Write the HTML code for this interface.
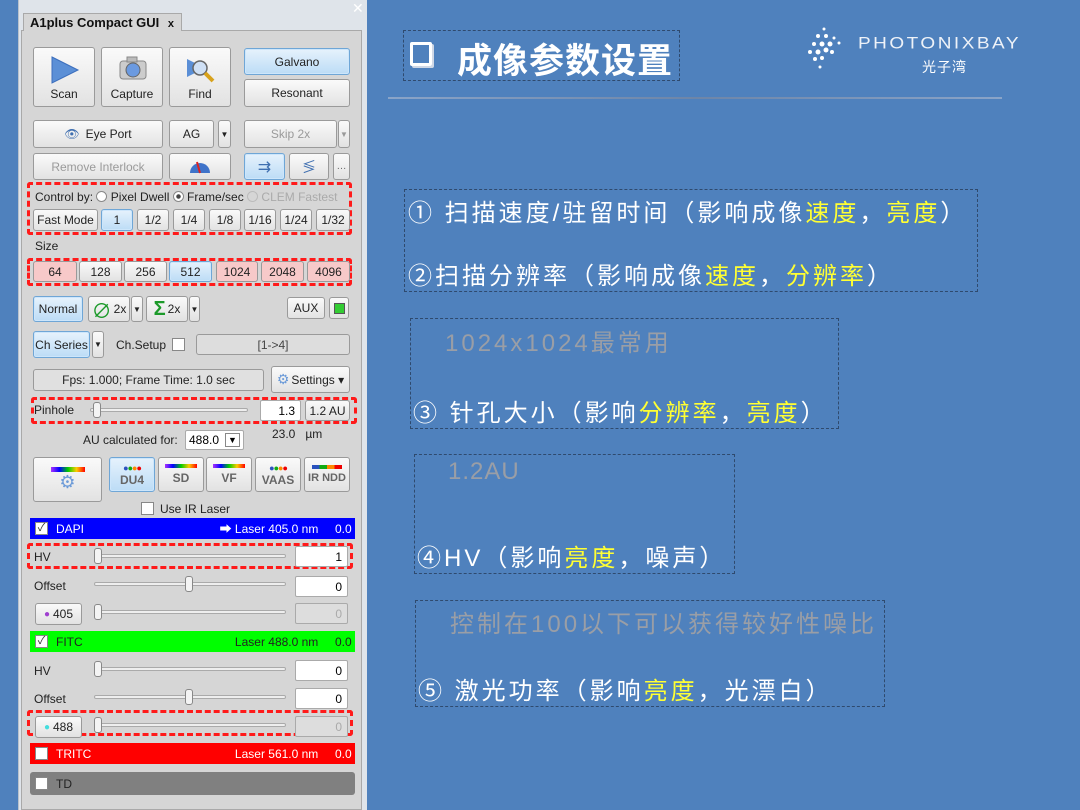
<!DOCTYPE html>
<html><head><meta charset="utf-8"><style>
*{margin:0;padding:0;box-sizing:border-box}
body{width:1080px;height:810px;overflow:hidden;background:#4f81bd;font-family:"Liberation Sans","Noto Sans CJK SC",sans-serif;position:relative}
.a{position:absolute}
.b{position:absolute;border:1px solid #9a9a9a;border-radius:3px;background:linear-gradient(#fafafa,#e2e2e2);font-size:12px;color:#222;display:flex;align-items:center;justify-content:center;white-space:nowrap}
.sel{background:linear-gradient(#e6f2fc,#bcdcf6);border-color:#6fa6d6;box-shadow:inset 0 0 0 1px #cde6fb}
.pk{background:#f7c9c9}
.dis{color:#9a9a9a}
.dash{position:absolute;border:3px dashed #ff1a1a;border-radius:3px}
.t{position:absolute;font-size:12px;color:#222;white-space:nowrap}
.sl{position:absolute;height:4px;border:1px solid #aaa;border-radius:2px;background:#eee}
.th{position:absolute;width:8px;height:16px;border:1px solid #888;border-radius:3px;background:#f4f4f4}
.in{position:absolute;background:#fff;border:1px solid #aaa;border-radius:2px;font-size:12px;text-align:right;padding-right:5px;display:flex;align-items:center;justify-content:flex-end}
.bar{position:absolute;left:30px;width:325px;height:21px;font-size:12px;display:flex;align-items:center}
.cb{width:13px;height:13px;background:#fff;border:1px solid #888;margin:0 8px 0 5px;font-size:11px;line-height:11px;text-align:center;color:#333}
.rbox{position:absolute;border:1px dashed #2f4a6e}
.r{position:absolute;white-space:nowrap;color:#fff;font-size:24px;letter-spacing:3px}
.y{color:#ffff33}
.g{color:#9a9ea6}
</style></head><body>
<div class="a" style="left:18px;top:0;width:349px;height:810px;background:#dfe4ea;border-left:1px solid #b9c2cc"></div>
<div class="a" style="left:352px;top:0;font-size:14px;color:#fff">✕</div>
<div class="a" style="left:21px;top:30px;width:341px;height:780px;background:#d6d6d6;border:1px solid #a9a9a9"></div>
<div class="a" style="left:23px;top:13px;width:159px;height:18px;background:#d6d6d6;border:1px solid #a9a9a9;border-bottom:none;font-size:13px;font-weight:bold;padding:1px 0 0 6px;color:#111">A1plus Compact GUI <span style="font-size:11px;margin-left:5px">x</span></div>

<div class="b" style="left:33px;top:47px;width:62px;height:60px;flex-direction:column;justify-content:flex-end;padding-bottom:5px"><svg class="a" style="left:16px;top:8px" width="30" height="28"><polygon points="2,1 28,14 2,27" fill="#5b8fd6" stroke="#3c6ebd"/></svg>Scan</div>
<div class="b" style="left:101px;top:47px;width:62px;height:60px;flex-direction:column;justify-content:flex-end;padding-bottom:5px"><svg class="a" style="left:17px;top:8px" width="28" height="24"><rect x="1" y="5" width="26" height="18" rx="3" fill="#ccc" stroke="#888"/><rect x="8" y="1" width="10" height="5" fill="#bbb" stroke="#888"/><circle cx="14" cy="14" r="7" fill="#6b9ae0" stroke="#666"/></svg>Capture</div>
<div class="b" style="left:169px;top:47px;width:62px;height:60px;flex-direction:column;justify-content:flex-end;padding-bottom:5px"><svg class="a" style="left:15px;top:8px" width="32" height="28"><polygon points="2,3 20,12 2,21" fill="#5b8fd6"/><circle cx="15" cy="12" r="7" fill="#cfe0f5" stroke="#666" stroke-width="1.5"/><line x1="20" y1="17" x2="28" y2="25" stroke="#d8a21c" stroke-width="4"/></svg>Find</div>
<div class="b sel" style="left:244px;top:48px;width:106px;height:27px">Galvano</div>
<div class="b" style="left:244px;top:79px;width:106px;height:28px">Resonant</div>

<div class="b" style="left:33px;top:120px;width:130px;height:28px"><span style="color:#3f6fb0;margin-right:6px">👁</span>Eye Port</div>
<div class="b" style="left:169px;top:120px;width:45px;height:28px">AG</div>
<div class="b" style="left:218px;top:120px;width:13px;height:28px;font-size:8px">▼</div>
<div class="b dis" style="left:244px;top:120px;width:93px;height:28px">Skip 2x</div>
<div class="b dis" style="left:338px;top:120px;width:12px;height:28px;font-size:8px">▼</div>
<div class="b dis" style="left:33px;top:153px;width:130px;height:27px">Remove Interlock</div>
<div class="b" style="left:169px;top:153px;width:62px;height:27px"><svg width="24" height="14"><path d="M2,13 A10,10 0 0 1 22,13Z" fill="#3f73c9"/><line x1="12" y1="13" x2="9" y2="2" stroke="#d22" stroke-width="2"/></svg></div>
<div class="b sel" style="left:244px;top:153px;width:41px;height:27px;color:#3f6fb0;font-size:16px">⇉</div>
<div class="b" style="left:289px;top:153px;width:40px;height:27px;color:#3f6fb0;font-size:14px">≶</div>
<div class="b" style="left:333px;top:153px;width:17px;height:27px;font-size:10px;color:#666">…</div>

<div class="dash" style="left:27px;top:182px;width:325px;height:53px"></div>
<div class="t" style="left:35px;top:190px">Control by: <span style="display:inline-block;width:11px;height:11px;border:1px solid #888;border-radius:50%;background:#fff;vertical-align:-1px"></span> Pixel Dwell <span style="display:inline-block;width:11px;height:11px;border:1px solid #888;border-radius:50%;background:radial-gradient(#444 30%,#fff 40%);vertical-align:-1px"></span> Frame/sec <span style="color:#aaa"><span style="display:inline-block;width:11px;height:11px;border:1px solid #bbb;border-radius:50%;vertical-align:-1px"></span> CLEM Fastest</span></div>
<div class="b" style="left:33px;top:209px;width:65px;height:22px">Fast Mode</div>
<div class="b sel" style="left:101px;top:209px;width:32px;height:22px">1</div>
<div class="b" style="left:137px;top:209px;width:32px;height:22px">1/2</div>
<div class="b" style="left:173px;top:209px;width:32px;height:22px">1/4</div>
<div class="b" style="left:209px;top:209px;width:32px;height:22px">1/8</div>
<div class="b" style="left:244px;top:209px;width:32px;height:22px">1/16</div>
<div class="b" style="left:280px;top:209px;width:32px;height:22px">1/24</div>
<div class="b" style="left:316px;top:209px;width:34px;height:22px">1/32</div>
<div class="t" style="left:35px;top:239px">Size</div>
<div class="dash" style="left:27px;top:258px;width:325px;height:28px"></div>
<div class="b pk" style="left:33px;top:261px;width:44px;height:21px">64</div>
<div class="b" style="left:79px;top:261px;width:43px;height:21px">128</div>
<div class="b" style="left:124px;top:261px;width:43px;height:21px">256</div>
<div class="b sel" style="left:169px;top:261px;width:43px;height:21px">512</div>
<div class="b pk" style="left:216px;top:261px;width:42px;height:21px">1024</div>
<div class="b pk" style="left:261px;top:261px;width:43px;height:21px">2048</div>
<div class="b pk" style="left:307px;top:261px;width:43px;height:21px">4096</div>

<div class="b sel" style="left:33px;top:296px;width:50px;height:26px">Normal</div>
<div class="b" style="left:88px;top:296px;width:42px;height:26px"><span style="color:#1c9a2a;font-size:20px;margin-right:2px">∅</span>2x</div>
<div class="b" style="left:131px;top:296px;width:12px;height:26px;font-size:8px">▼</div>
<div class="b" style="left:146px;top:296px;width:42px;height:26px"><span style="color:#1c9a2a;font-size:20px;font-weight:bold;margin-right:2px">Σ</span>2x</div>
<div class="b" style="left:189px;top:296px;width:11px;height:26px;font-size:8px">▼</div>
<div class="b" style="left:287px;top:297px;width:38px;height:22px">AUX</div>
<div class="b" style="left:329px;top:297px;width:20px;height:22px"><div style="width:11px;height:11px;background:#3c3;border:1px solid #555"></div></div>

<div class="b sel" style="left:33px;top:331px;width:57px;height:27px">Ch Series</div>
<div class="b" style="left:92px;top:331px;width:12px;height:27px;font-size:8px">▼</div>
<div class="t" style="left:116px;top:338px">Ch.Setup</div>
<div class="a" style="left:172px;top:338px;width:13px;height:13px;background:#fff;border:1px solid #888"></div>
<div class="b" style="left:196px;top:334px;width:154px;height:21px;background:#ddd;color:#444">[1-&gt;4]</div>
<div class="b" style="left:33px;top:369px;width:231px;height:22px;background:#e0e0e0">Fps: 1.000; Frame Time: 1.0 sec</div>
<div class="b" style="left:271px;top:366px;width:79px;height:27px"><span style="color:#6b9ad8;font-size:14px;margin-right:2px">⚙</span>Settings ▾</div>

<div class="dash" style="left:31px;top:397px;width:326px;height:27px"></div>
<div class="t" style="left:34px;top:403px">Pinhole</div>
<div class="sl" style="left:90px;top:408px;width:158px"></div>
<div class="th" style="left:93px;top:402px"></div>
<div class="in" style="left:260px;top:400px;width:41px;height:21px">1.3</div>
<div class="b" style="left:305px;top:400px;width:45px;height:21px">1.2 AU</div>
<div class="t" style="left:272px;top:427px">23.0 &nbsp; µm</div>
<div class="t" style="left:83px;top:433px">AU calculated for:</div>
<div class="in" style="left:185px;top:430px;width:59px;height:20px;justify-content:flex-start;padding-left:3px">488.0<span style="margin-left:6px;font-size:9px;border:1px solid #888;padding:1px 2px">▼</span></div>

<div class="b" style="left:33px;top:457px;width:69px;height:45px;flex-direction:column"><div style="width:34px;height:5px;background:linear-gradient(90deg,#a3f,#00f,#0c0,#fc0,#f00)"></div><span style="color:#6b9ad8;font-size:18px">⚙</span></div>
<div class="b sel" style="left:109px;top:457px;width:46px;height:35px;flex-direction:column;font-weight:bold;color:#666"><span style="font-size:9px;letter-spacing:-1px"><span style="color:#2a52be">●</span><span style="color:#1a1">●</span><span style="color:#f80">●</span><span style="color:#e00">●</span></span>DU4</div>
<div class="b" style="left:158px;top:457px;width:46px;height:35px;flex-direction:column;font-weight:bold;color:#666"><div style="width:32px;height:4px;background:linear-gradient(90deg,#a3f,#00f,#0c0,#fc0,#f00);margin-bottom:3px"></div>SD</div>
<div class="b" style="left:206px;top:457px;width:46px;height:35px;flex-direction:column;font-weight:bold;color:#666"><div style="width:32px;height:4px;background:linear-gradient(90deg,#a3f,#00f,#0c0,#fc0,#f00);margin-bottom:3px"></div>VF</div>
<div class="b" style="left:255px;top:457px;width:46px;height:35px;flex-direction:column;font-weight:bold;color:#666"><span style="font-size:9px;letter-spacing:-1px"><span style="color:#2a52be">●</span><span style="color:#1a1">●</span><span style="color:#f80">●</span><span style="color:#e00">●</span></span>VAAS</div>
<div class="b" style="left:304px;top:457px;width:46px;height:35px;flex-direction:column;font-weight:bold;color:#666;font-size:11px"><div style="width:30px;height:4px;background:linear-gradient(90deg,#2a52be 25%,#1a1 25% 50%,#f80 50% 75%,#e00 75%);margin-bottom:3px"></div>IR NDD</div>
<div class="a" style="left:141px;top:502px;width:13px;height:13px;background:#fff;border:1px solid #888"></div>
<div class="t" style="left:160px;top:502px">Use IR Laser</div>

<div class="bar" style="top:518px;background:#0000ff;color:#fff"><div class="cb">✓</div>DAPI<span style="margin-left:auto">➡ Laser 405.0 nm&nbsp;&nbsp;&nbsp;&nbsp;&nbsp;0.0&nbsp;</span></div>
<div class="dash" style="left:27px;top:543px;width:326px;height:26px"></div>
<div class="t" style="left:34px;top:550px">HV</div>
<div class="sl" style="left:94px;top:554px;width:192px"></div><div class="th" style="left:94px;top:548px"></div>
<div class="in" style="left:295px;top:546px;width:53px;height:21px">1</div>
<div class="t" style="left:34px;top:579px">Offset</div>
<div class="sl" style="left:94px;top:582px;width:192px"></div><div class="th" style="left:185px;top:576px"></div>
<div class="in" style="left:295px;top:576px;width:53px;height:21px">0</div>
<div class="b" style="left:35px;top:603px;width:47px;height:22px"><span style="color:#a040d0;font-size:10px;margin-right:3px">●</span>405</div>
<div class="sl" style="left:94px;top:610px;width:192px"></div><div class="th" style="left:94px;top:604px"></div>
<div class="in" style="left:295px;top:603px;width:53px;height:21px;background:#ddd;color:#aaa">0</div>

<div class="bar" style="top:631px;background:#00ff00;color:#222"><div class="cb">✓</div>FITC<span style="margin-left:auto">Laser 488.0 nm&nbsp;&nbsp;&nbsp;&nbsp;&nbsp;0.0&nbsp;</span></div>
<div class="t" style="left:34px;top:664px">HV</div>
<div class="sl" style="left:94px;top:667px;width:192px"></div><div class="th" style="left:94px;top:661px"></div>
<div class="in" style="left:295px;top:660px;width:53px;height:21px">0</div>
<div class="t" style="left:34px;top:692px">Offset</div>
<div class="sl" style="left:94px;top:695px;width:192px"></div><div class="th" style="left:185px;top:689px"></div>
<div class="in" style="left:295px;top:688px;width:53px;height:21px">0</div>
<div class="dash" style="left:27px;top:710px;width:326px;height:26px"></div>
<div class="b" style="left:35px;top:716px;width:47px;height:22px"><span style="color:#4dd;font-size:10px;margin-right:3px">●</span>488</div>
<div class="sl" style="left:94px;top:723px;width:192px"></div><div class="th" style="left:94px;top:717px"></div>
<div class="in" style="left:295px;top:716px;width:53px;height:21px;background:#ddd;color:#aaa">0</div>
<div class="bar" style="top:743px;background:#ff0000;color:#fff"><div class="cb"></div>TRITC<span style="margin-left:auto">Laser 561.0 nm&nbsp;&nbsp;&nbsp;&nbsp;&nbsp;0.0&nbsp;</span></div>
<div class="bar" style="top:772px;height:23px;background:#808080;color:#222;border-radius:3px"><div class="cb"></div>TD</div>

<!-- right side -->
<div class="rbox" style="left:403px;top:30px;width:277px;height:51px"></div>
<div class="a" style="left:410px;top:42px;width:22px;height:24px;border:3px solid #fff;border-radius:2px;box-shadow:2px 2px 0 #cfd8e6"></div>
<div class="r" style="left:457px;top:33px;font-size:35px;font-weight:bold;letter-spacing:1px">成像参数设置</div>
<svg class="a" style="left:806px;top:26px" width="40" height="48"><g fill="#fff"><circle cx="18" cy="3" r="1.5"/><circle cx="12" cy="10" r="2"/><circle cx="20" cy="10" r="2"/><circle cx="28" cy="12" r="1.5"/><circle cx="8" cy="18" r="2"/><circle cx="16" cy="18" r="2.5"/><circle cx="24" cy="18" r="2.5"/><circle cx="33" cy="17" r="1.5"/><circle cx="4" cy="26" r="2"/><circle cx="12" cy="26" r="2.5"/><circle cx="20" cy="24" r="2.5"/><circle cx="26" cy="26" r="2"/><circle cx="9" cy="33" r="2"/><circle cx="16" cy="32" r="2"/><circle cx="14" cy="41" r="1.5"/></g></svg>
<div class="r" style="left:858px;top:35px;font-size:19px;letter-spacing:2.5px;transform:scaleY(0.85);transform-origin:left top;color:#eef2f8">PHOTONIXBAY</div>
<div class="r" style="left:922px;top:57px;font-size:14px;letter-spacing:1px">光子湾</div>
<div class="a" style="left:388px;top:97px;width:614px;height:2px;background:linear-gradient(90deg,#8aa4c8,#6d85a8,#8aa4c8)"></div>

<div class="rbox" style="left:404px;top:189px;width:574px;height:103px"></div>
<div class="r" style="left:408px;top:193px">① 扫描速度/驻留时间（影响成像<span class="y">速度</span>，<span class="y">亮度</span>）</div>
<div class="r" style="left:408px;top:256px">②扫描分辨率（影响成像<span class="y">速度</span>，<span class="y">分辨率</span>）</div>
<div class="rbox" style="left:410px;top:318px;width:429px;height:111px"></div>
<div class="r g" style="left:445px;top:323px">1024x1024最常用</div>
<div class="r" style="left:413px;top:393px">③ 针孔大小（影响<span class="y">分辨率</span>，<span class="y">亮度</span>）</div>
<div class="rbox" style="left:414px;top:454px;width:321px;height:120px"></div>
<div class="r g" style="left:448px;top:458px;letter-spacing:1px">1.2AU</div>
<div class="r" style="left:417px;top:538px">④HV（影响<span class="y">亮度</span>，噪声）</div>
<div class="rbox" style="left:415px;top:600px;width:470px;height:107px"></div>
<div class="r g" style="left:450px;top:604px">控制在100以下可以获得较好性噪比</div>
<div class="r" style="left:418px;top:671px">⑤ 激光功率（影响<span class="y">亮度</span>，光漂白）</div>
</body></html>
